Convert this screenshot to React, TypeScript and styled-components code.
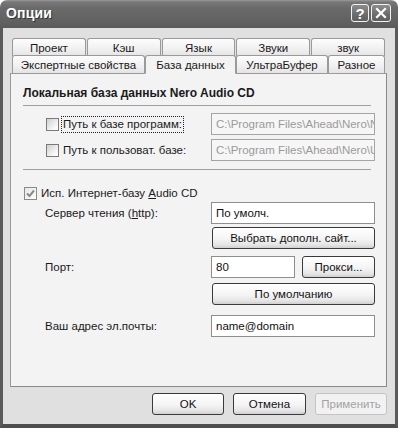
import React from 'react';
import styled, { createGlobalStyle } from 'styled-components';

const GlobalStyle = createGlobalStyle`
  html, body {
    margin: 0;
    padding: 0;
    background: #ffffff;
  }
  body {
    font-family: "Liberation Sans", Arial, sans-serif;
    font-size: 11.5px;
    color: #1a1a1a;
  }
`;

const Window = styled.div`
  width: 398px;
  height: 428px;
  display: flex;
  flex-direction: column;
  box-sizing: border-box;
`;

const TitleBar = styled.div`
  height: 28px;
  flex: none;
  display: flex;
  align-items: center;
  padding: 0 7px 2px 6px;
  box-sizing: border-box;
  border-radius: 7px 7px 0 0;
  background: linear-gradient(#9a9a9a 0px, #787878 2px, #6a6a6a 8px, #626262 20px, #5a5a5a 28px);
`;

const Title = styled.div`
  flex: 1;
  color: #ffffff;
  font-weight: bold;
  font-size: 14px;
  letter-spacing: 0.2px;
  text-shadow: 1px 1px 0 #333333;
`;

const TitleButtons = styled.div`
  display: flex;
  gap: 2px;
`;

const TitleButton = styled.div<{ wide?: boolean }>`
  width: ${(p) => (p.wide ? 20 : 18)}px;
  height: 18px;
  box-sizing: border-box;
  border: 1px solid #f2f2f2;
  border-radius: 3px;
  background: linear-gradient(#8c8c8c, #6c6c6c 60%, #5e5e5e);
  display: flex;
  align-items: center;
  justify-content: center;
  color: #ffffff;
  font-weight: bold;
  font-size: 15px;
  line-height: 1;
`;

const Frame = styled.div`
  flex: 1;
  display: flex;
  flex-direction: column;
  border-left: 3px solid #5a5a5a;
  border-right: 3px solid #5a5a5a;
  border-bottom: 4px solid #4e4e4e;
  background: #e0e0e0;
  padding: 10px 8px 0 7px;
  box-sizing: border-box;
`;

const TabRow = styled.div<{ spaced?: boolean }>`
  display: flex;
  align-items: flex-end;
  gap: ${(p) => (p.spaced ? 1 : 0)}px;
  padding: 0 2px;
`;

const Tab = styled.div<{ w?: number; selected?: boolean }>`
  ${(p) => (p.w ? `width: ${p.w}px; flex: none;` : 'flex: 1;')}
  height: ${(p) => (p.selected ? 19 : 18)}px;
  box-sizing: border-box;
  border: 1px solid #9a9a9a;
  border-bottom: ${(p) => (p.selected ? '1px solid #f3f3f3' : 'none')};
  border-radius: 3px 3px 0 0;
  background: ${(p) => (p.selected ? '#f3f3f3' : 'linear-gradient(#fdfdfd, #f0f0f0 60%, #e4e4e4)')};
  display: flex;
  align-items: center;
  justify-content: center;
  white-space: nowrap;
  position: relative;
  z-index: ${(p) => (p.selected ? 2 : 1)};
  margin-bottom: ${(p) => (p.selected ? -1 : 0)}px;
`;

const SecondRow = styled(TabRow)`
  margin-top: -1px;
  height: 18px;
`;

const Panel = styled.div`
  height: 314px;
  flex: none;
  box-sizing: border-box;
  border: 1px solid #9a9a9a;
  border-right-color: #8a8a8a;
  border-bottom-color: #8a8a8a;
  background: #f3f3f3;
  padding: 12px 11px 0 12px;
  display: flex;
  flex-direction: column;
  position: relative;
  z-index: 1;
`;

const Heading = styled.div`
  font-weight: bold;
  font-size: 12px;
  height: 15px;
  line-height: 15px;
`;

const Divider = styled.div<{ top: number }>`
  height: 1px;
  background: #a0a0a0;
  margin: ${(p) => p.top}px 4px 0 0;
`;

const Row = styled.div<{ top: number; indent?: number }>`
  display: flex;
  align-items: center;
  margin-top: ${(p) => p.top}px;
  padding-left: ${(p) => p.indent ?? 0}px;
  min-height: 22px;
`;

const Label = styled.div`
  flex: 1;
  white-space: nowrap;
`;

const CheckLabel = styled.label`
  flex: 1;
  display: flex;
  align-items: center;
  gap: 2px;
  white-space: nowrap;
`;

const CheckText = styled.span<{ focused?: boolean }>`
  padding: 1px 1px 2px 1px;
  border: 1px dotted ${(p) => (p.focused ? '#222222' : 'transparent')};
`;

const Box = styled.span<{ checked?: boolean }>`
  width: 13px;
  height: 13px;
  flex: none;
  box-sizing: border-box;
  border: 1px solid ${(p) => (p.checked ? '#8a8a8a' : '#7a7a7a')};
  background: ${(p) =>
    p.checked ? 'linear-gradient(135deg, #e6e6e6, #ffffff)' : 'linear-gradient(135deg, #cfcfcf, #f6f6f6 70%, #ffffff)'};
  display: flex;
  align-items: center;
  justify-content: center;
`;

const Field = styled.div<{ w?: number; disabled?: boolean }>`
  width: ${(p) => p.w ?? 164}px;
  height: 22px;
  flex: none;
  box-sizing: border-box;
  border: 1px solid ${(p) => (p.disabled ? '#a4a4a4' : '#8e8e8e')};
  background: ${(p) => (p.disabled ? '#f6f6f6' : '#ffffff')};
  color: ${(p) => (p.disabled ? '#9a9a9a' : '#111111')};
  padding: 2px 4px 0 4px;
  white-space: nowrap;
  overflow: hidden;
  line-height: 16px;
`;

const Button = styled.div<{ w?: number; disabled?: boolean }>`
  width: ${(p) => p.w ?? 163}px;
  height: 22px;
  flex: none;
  box-sizing: border-box;
  border: 1px solid ${(p) => (p.disabled ? '#c4c4c4' : '#3a3a3a')};
  border-radius: 3px;
  background: ${(p) =>
    p.disabled ? '#f2f2f2' : 'linear-gradient(#ffffff, #f4f4f4 55%, #e4e4e4 85%, #cfcfcf)'};
  color: ${(p) => (p.disabled ? '#a2a2a2' : '#111111')};
  display: flex;
  align-items: center;
  justify-content: center;
  white-space: nowrap;
`;

const Fields = styled.div`
  display: flex;
  gap: 7px;
`;

const Footer = styled.div`
  display: flex;
  justify-content: flex-end;
  gap: 9px;
  margin-top: 6px;
`;

const Check = () => (
  <svg width="9" height="9" viewBox="0 0 9 9">
    <polyline points="1,4.5 3.5,7 8,1.5" fill="none" stroke="#8a8a8a" strokeWidth="2" />
  </svg>
);

const CloseGlyph = () => (
  <svg width="12" height="12" viewBox="0 0 12 12">
    <path d="M2 2 L10 10 M10 2 L2 10" stroke="#ffffff" strokeWidth="2.2" strokeLinecap="square" />
  </svg>
);

const App: React.FC = () => {
  return (
    <>
      <GlobalStyle />
      <Window>
        <TitleBar>
          <Title>Опции</Title>
          <TitleButtons>
            <TitleButton>?</TitleButton>
            <TitleButton wide>
              <CloseGlyph />
            </TitleButton>
          </TitleButtons>
        </TitleBar>
        <Frame>
          <TabRow spaced>
            <Tab>Проект</Tab>
            <Tab>Кэш</Tab>
            <Tab>Язык</Tab>
            <Tab>Звуки</Tab>
            <Tab>звук</Tab>
          </TabRow>
          <SecondRow>
            <Tab w={133}>Экспертные свойства</Tab>
            <Tab w={91} selected>
              База данных
            </Tab>
            <Tab w={92}>УльтраБуфер</Tab>
            <Tab w={57}>Разное</Tab>
          </SecondRow>

          <Panel>
            <Heading>Локальная база данных Nero Audio CD</Heading>
            <Divider top={4} />

            <Row top={7} indent={23}>
              <CheckLabel>
                <Box />
                <CheckText focused>Путь к базе программ:</CheckText>
              </CheckLabel>
              <Field disabled>C:\Program Files\Ahead\Nero\Nero</Field>
            </Row>
            <Row top={4} indent={23}>
              <CheckLabel>
                <Box />
                <CheckText>Путь к пользоват. базе:</CheckText>
              </CheckLabel>
              <Field disabled>C:\Program Files\Ahead\Nero\User</Field>
            </Row>
            <Divider top={8} />

            <Row top={12} indent={1}>
              <CheckLabel>
                <Box checked>
                  <Check />
                </Box>
                <CheckText>
                  Исп. Интернет-базу <u>A</u>udio CD
                </CheckText>
              </CheckLabel>
            </Row>
            <Row top={-2} indent={22}>
              <Label>
                Сервер чтения (<u>h</u>ttp):
              </Label>
              <Field>По умолч.</Field>
            </Row>
            <Row top={3} indent={22}>
              <Label />
              <Button>Выбрать дополн. сайт...</Button>
            </Row>
            <Row top={7} indent={22}>
              <Label>Порт:</Label>
              <Fields>
                <Field w={84}>80</Field>
                <Button w={73}>Прокси...</Button>
              </Fields>
            </Row>
            <Row top={5} indent={22}>
              <Label />
              <Button>По умолчанию</Button>
            </Row>
            <Row top={10} indent={22}>
              <Label>Ваш адрес эл.почты:</Label>
              <Field>name@domain</Field>
            </Row>
          </Panel>

          <Footer>
            <Button w={72}>OK</Button>
            <Button w={73}>Отмена</Button>
            <Button w={72} disabled>
              Применить
            </Button>
          </Footer>
        </Frame>
      </Window>
    </>
  );
};

export default App;
